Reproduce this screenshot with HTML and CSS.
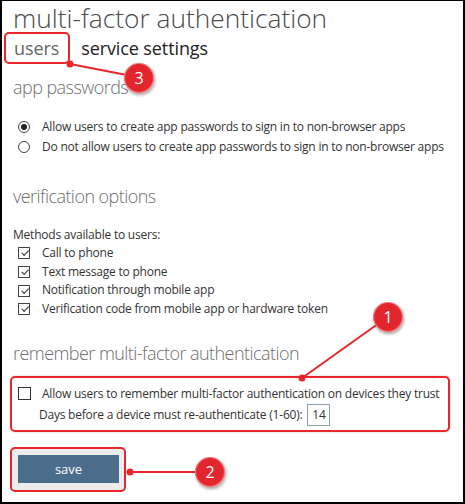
FILE: index.html
```html
<!DOCTYPE html>
<html>
<head>
<meta charset="utf-8">
<link rel="stylesheet" href="styles.css">
</head>
<body>
<div class="frame">
  <h1 class="title">multi-factor authentication</h1>
  <div class="tabs">
    <span class="tab tab-active mark">users</span>
    <span class="tab tab-other">service settings</span>
  </div>

  <h2 class="section">app passwords</h2>
  <div class="options">
    <label class="row orow"><span class="radio on"></span><span>Allow users to create app passwords to sign in to non-browser apps</span></label>
    <label class="row orow"><span class="radio"></span><span>Do not allow users to create app passwords to sign in to non-browser apps</span></label>
  </div>

  <h2 class="section sec2">verification options</h2>
  <div class="methods">
    <div class="caption">Methods available to users:</div>
    <label class="row crow"><span class="check on"></span><span>Call to phone</span></label>
    <label class="row crow"><span class="check on"></span><span>Text message to phone</span></label>
    <label class="row crow"><span class="check on"></span><span>Notification through mobile app</span></label>
    <label class="row crow"><span class="check on"></span><span>Verification code from mobile app or hardware token</span></label>
  </div>

  <h2 class="section sec3">remember multi-factor authentication</h2>
  <div class="remember mark">
    <label class="row rrow"><span class="check"></span><span>Allow users to remember multi-factor authentication on devices they trust</span></label>
    <div class="days"><span>Days before a device must re-authenticate (1-60):</span><span class="num">14</span></div>
  </div>

  <div class="savewrap mark">
    <button class="save">save</button>
  </div>

  <svg class="overlay" width="465" height="504" viewBox="0 0 465 504">
    <defs>
      <filter id="sh" x="-50%" y="-50%" width="200%" height="200%">
        <feDropShadow dx="1" dy="2" stdDeviation="1.5" flood-color="#000" flood-opacity="0.35"/>
      </filter>
    </defs>
    <g stroke="#e8262c" stroke-width="2">
      <line x1="68" y1="63" x2="130" y2="75"/>
      <line x1="300" y1="377" x2="380" y2="320"/>
      <line x1="128" y1="471" x2="195" y2="471"/>
    </g>
    <g fill="#e8262c">
      <circle cx="68" cy="63" r="3.5"/>
      <circle cx="300" cy="377" r="3.5"/>
      <circle cx="128" cy="471" r="3.5"/>
    </g>
    <g filter="url(#sh)" fill="#e3262d" stroke="#f47a7a" stroke-width="1.2">
      <circle cx="137" cy="77" r="14.5"/>
      <circle cx="386" cy="316" r="14.5"/>
      <circle cx="208" cy="471" r="14.5"/>
    </g>
    <g class="badge-num" fill="#fff" text-anchor="middle">
      <text x="137" y="83">3</text>
      <text x="386" y="322">1</text>
      <text x="208" y="477">2</text>
    </g>
  </svg>
</div>
</body>
</html>
```

FILE: styles.css
```css
html, body { margin: 0; padding: 0; background: #fff; }
body { font-family: "Open Sans", "Noto Sans", sans-serif; }
.frame {
  position: relative;
  width: 465px;
  height: 504px;
  box-sizing: border-box;
  border: 1px solid #000;
  border-width: 1px 2px 2px 2px;
  padding: 0 0 0 11px;
  overflow: hidden;
}
.title {
  margin: 0;
  font-weight: 300;
  font-size: 26.3px;
  line-height: 34px;
  color: #4a4a4a;
}
.tabs {
  display: flex;
  align-items: center;
  margin-left: -9px;
  margin-top: -3px;
}
.tab { font-size: 18px; line-height: 22px; letter-spacing: -0.1px; }
.tab-active {
  color: #666;
  padding: 3px 9px 3px 8px;
  border: 2px solid #e8262c;
  border-radius: 5px;
}
.tab-other { color: #222; margin-left: 11px; font-weight: 400; }
.section {
  margin: 11px 0 0 0;
  font-weight: 300;
  font-size: 18px;
  line-height: 24px;
  letter-spacing: -0.55px;
  color: #6e6e6e;
}
.options { margin-top: 18px; margin-left: 5px; }
.row {
  display: flex;
  align-items: center;
  font-size: 12px;
  line-height: 19px;
  letter-spacing: -0.22px;
  color: #333;
}
.orow { line-height: 20px; }
.radio {
  width: 10px; height: 10px;
  border: 1px solid #444;
  border-radius: 50%;
  margin-right: 12px;
  position: relative;
  flex: none;
}
.radio.on::after {
  content: "";
  position: absolute;
  left: 2px; top: 2px;
  width: 6px; height: 6px;
  border-radius: 50%;
  background: #222;
}
.sec2 { margin-top: 27px; }
.methods { margin-top: 17px; }
.caption { font-size: 12px; line-height: 19px; letter-spacing: -0.22px; color: #333; }
.crow { margin-left: 5px; line-height: 18.7px; }
.check {
  width: 10px; height: 10px;
  border: 1px solid #444;
  margin-right: 12px;
  position: relative;
  flex: none;
}
.check.on::after {
  content: "";
  position: absolute;
  left: 2px; top: 0px;
  width: 6px; height: 3px;
  border-left: 1px solid #333;
  border-bottom: 1px solid #333;
  transform: rotate(-45deg) translate(-1px, 2px);
}
.sec3 { margin-top: 22px; }
.remember {
  margin: 11px 0 0 -3px;
  width: 440px;
  height: 56px;
  border: 2px solid #e8262c;
  border-radius: 5px;
  box-shadow: 0 0 2px rgba(0,0,0,0.25);
  padding: 6px 0 0 6px;
  box-sizing: border-box;
}
.rrow { height: 20px; }
.rrow .check { width: 11px; height: 11px; border-color: #333; margin-right: 11px; }
.days {
  display: flex;
  align-items: center;
  font-size: 12px;
  letter-spacing: -0.22px;
  color: #333;
  margin-left: 21px;
}
.num {
  margin-left: 5px;
  width: 21px;
  height: 20px;
  border: 1px solid #8fa0b0;
  display: flex;
  align-items: center;
  justify-content: center;
}
.savewrap {
  margin: 15px 0 0 -3px;
  width: 116px;
  height: 45px;
  border: 2px solid #e8262c;
  border-radius: 5px;
  background: #ececec;
  box-sizing: border-box;
  display: flex;
  align-items: center;
  justify-content: center;
  padding-left: 1px;
}
.save {
  width: 101px;
  height: 28px;
  border: none;
  background: #4a6d8b;
  color: #fff;
  font-family: "Open Sans", "Noto Sans", sans-serif;
  font-size: 13px;
  padding: 0;
}
.overlay { position: absolute; left: 0; top: 0; pointer-events: none; }
.badge-num { font-family: "Open Sans", "Noto Sans", sans-serif; font-size: 16px; }
```
